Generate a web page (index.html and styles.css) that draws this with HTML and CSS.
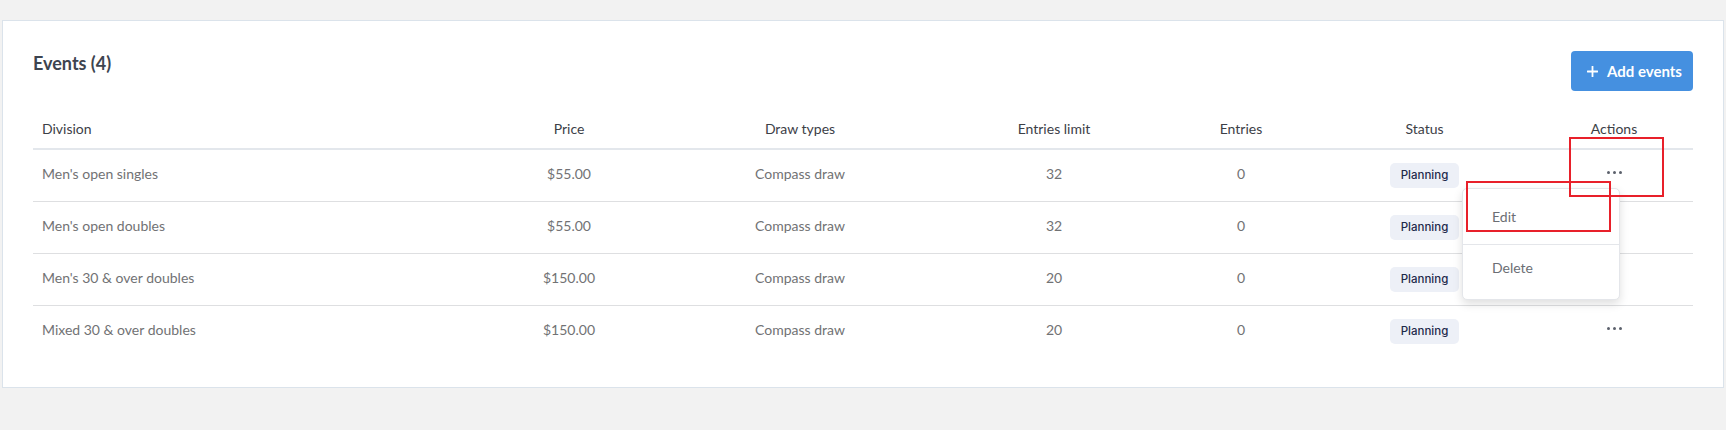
FILE: index.html
```html
<!DOCTYPE html>
<html lang="en">
<head>
<meta charset="utf-8">
<title>Events</title>
<link rel="stylesheet" href="styles.css">
</head>
<body>
<div class="page">
  <section class="card">
    <header class="card-head">
      <h2 class="title">Events (4)</h2>
      <button class="btn-add" type="button">
        <svg class="plus" width="11" height="11" viewBox="0 0 11 11" aria-hidden="true"><path d="M5.5 0.5v10M0.5 5.5h10" stroke="#fff" stroke-width="1.8" fill="none" stroke-linecap="round"/></svg>
        <span>Add events</span>
      </button>
    </header>
    <div class="table">
      <div class="row row-head">
        <div class="cell cell-left">Division</div>
        <div class="cell">Price</div>
        <div class="cell">Draw types</div>
        <div class="cell">Entries limit</div>
        <div class="cell">Entries</div>
        <div class="cell">Status</div>
        <div class="cell">Actions</div>
      </div>
      <div class="row">
        <div class="cell cell-left">Men's open singles</div>
        <div class="cell">$55.00</div>
        <div class="cell">Compass draw</div>
        <div class="cell">32</div>
        <div class="cell">0</div>
        <div class="cell"><span class="badge">Planning</span></div>
        <div class="cell cell-actions">
          <span class="dots"><i></i><i></i><i></i></span>
          <div class="menu">
            <div class="menu-item menu-edit">Edit</div>
            <div class="menu-item menu-delete">Delete</div>
          </div>
        </div>
      </div>
      <div class="row">
        <div class="cell cell-left">Men's open doubles</div>
        <div class="cell">$55.00</div>
        <div class="cell">Compass draw</div>
        <div class="cell">32</div>
        <div class="cell">0</div>
        <div class="cell"><span class="badge">Planning</span></div>
        <div class="cell cell-actions"></div>
      </div>
      <div class="row">
        <div class="cell cell-left">Men's 30 &amp; over doubles</div>
        <div class="cell">$150.00</div>
        <div class="cell">Compass draw</div>
        <div class="cell">20</div>
        <div class="cell">0</div>
        <div class="cell"><span class="badge">Planning</span></div>
        <div class="cell cell-actions"></div>
      </div>
      <div class="row row-last">
        <div class="cell cell-left">Mixed 30 &amp; over doubles</div>
        <div class="cell">$150.00</div>
        <div class="cell">Compass draw</div>
        <div class="cell">20</div>
        <div class="cell">0</div>
        <div class="cell"><span class="badge">Planning</span></div>
        <div class="cell cell-actions"><span class="dots"><i></i><i></i><i></i></span></div>
      </div>
    </div>
  </section>
  <div class="annot annot-dots"></div>
  <div class="annot annot-edit"></div>
</div>
</body>
</html>
```

FILE: styles.css
```css
* { box-sizing: border-box; }

html, body {
  margin: 0;
  padding: 0;
  background: #f2f2f2;
  font-family: Lato, "Noto Sans", "Liberation Sans", sans-serif;
}

.page {
  position: relative;
  padding: 20px 2px 0 2px;
  height: 430px;
}

.card {
  background: #ffffff;
  border: 1px solid #dbe3eb;
  padding: 30px 30px 30px 30px;
}

.card-head {
  display: flex;
  justify-content: space-between;
  align-items: flex-start;
  height: 40px;
}

.title {
  margin: 0;
  font-size: 18px;
  line-height: 24px;
  font-weight: 700;
  color: #3d4450;
}

.btn-add {
  display: inline-flex;
  align-items: center;
  gap: 9px;
  width: 122px;
  height: 40px;
  padding: 0 0 0 16px;
  border: 0;
  border-radius: 4px;
  background: #4590e0;
  color: #ffffff;
  font-family: inherit;
  font-size: 15px;
  font-weight: 700;
}

.plus { display: block; }

.table {
  margin-top: 20px;
}

.row {
  display: grid;
  grid-template-columns: 445px 182px 280px 228px 146px 221px 158px;
  height: 52px;
  border-bottom: 1px solid #dedfe1;
  font-size: 14px;
  color: #717274;
}

.row > .cell { padding-bottom: 3px; }

.row-head {
  height: 39px;
  border-bottom: 2px solid #e3e7ec;
  color: #3c4047;
}

.row-head > .cell { padding-bottom: 1px; }

.row-last { border-bottom: 0; height: 51px; }

.cell {
  display: flex;
  align-items: center;
  justify-content: center;
  line-height: 20px;
}

.cell-left {
  justify-content: flex-start;
  padding-left: 9px;
}

.cell-actions { position: relative; }

.row > .cell-badge, .row > .cell:nth-child(6) { padding-bottom: 1px; }

.badge {
  display: inline-flex;
  align-items: center;
  justify-content: center;
  height: 25px;
  padding: 0 11px;
  border-radius: 5px;
  background: #edf0f7;
  color: #1e2a4b;
  font-family: Inter, Lato, sans-serif;
  font-size: 11.5px;
  font-weight: 500;
}

.dots {
  display: inline-flex;
  gap: 3px;
  margin-top: -4px;
}
.dots i {
  display: block;
  width: 3px;
  height: 3px;
  border-radius: 50%;
  background: #5c616c;
}

.menu {
  position: absolute;
  left: -73px;
  top: 38px;
  width: 158px;
  height: 112px;
  background: #ffffff;
  border: 1px solid #e4e6ea;
  border-radius: 5px;
  box-shadow: 0 4px 10px rgba(0, 0, 0, 0.13);
  z-index: 2;
  font-size: 14px;
  color: #6b6e74;
}

.menu-item {
  padding-left: 29px;
  line-height: 20px;
}

.menu-edit {
  height: 56px;
  padding-top: 18px;
  border-bottom: 1px solid #e4e6ea;
}

.menu-delete {
  padding-top: 13px;
}

.annot {
  position: absolute;
  border: 2px solid #e8202a;
  z-index: 5;
}

.annot-dots {
  left: 1569px;
  top: 137px;
  width: 95px;
  height: 60px;
}

.annot-edit {
  left: 1466px;
  top: 181px;
  width: 145px;
  height: 51px;
}
```
